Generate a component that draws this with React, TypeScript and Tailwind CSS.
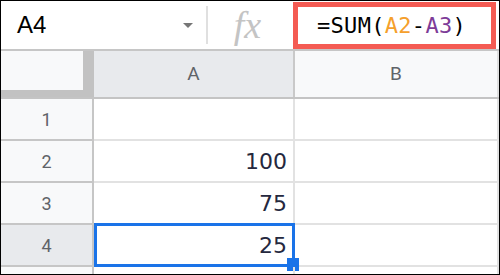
const ROWS = [
  { n: 1, value: '', label: '1' },
  { n: 2, value: '100', label: '2' },
  { n: 3, value: '75', label: '3' },
  { n: 4, value: '25', label: '4' },
  { n: 5, value: '', label: '' },
]

export default function App() {
  return (
    <div className="w-[500px] h-[275px] overflow-hidden bg-white border border-black flex flex-col">
      {/* Formula bar */}
      <div className="h-[50px] shrink-0 flex items-stretch border-b-2 border-[#c6c6c6]">
        <div className="w-[205px] flex items-center justify-between pl-4 pr-[13px]">
          <span className="text-[24px] text-black font-['Liberation_Sans',Arial,sans-serif] leading-none">A4</span>
          <span className="w-0 h-0 border-l-[5px] border-r-[5px] border-t-[5px] border-l-transparent border-r-transparent border-t-[#767676]" />
        </div>
        <div className="w-[2px] my-[5px] bg-[#e0e0e0]" />
        <div className="w-[85px] flex items-center justify-center pr-[6px]">
          <span className="text-[38px] italic text-[#c4c4c4] font-['Liberation_Serif',serif] leading-none">fx</span>
        </div>
        <div className="flex-1 mr-[3px] mt-[1px] border-[5px] border-[#f45b53] flex items-center pl-[19px]">
          <span className="text-[22px] text-black font-['DejaVu_Sans_Mono',monospace] leading-none tracking-[0.3px]">
            =SUM(<span className="text-[#f5a02c]">A2</span>-<span className="text-[#7d3c98]">A3</span>)
          </span>
        </div>
      </div>

      {/* Column headers */}
      <div className="h-[48px] shrink-0 grid grid-cols-[93px_201px_1fr] border-b-2 border-[#c4c4c4]">
        <div className="bg-[#c2c2c2]">
          <div className="w-[82px] h-[39px] bg-[#f8f9fa]" />
        </div>
        <div className="bg-[#e8eaed] border-r-2 border-[#c9c9c9] flex items-center justify-center text-[19px] text-[#5f6368] font-['Roboto',sans-serif]">
          A
        </div>
        <div className="bg-[#f8f9fa] border-r-2 border-[#e0e0e0] flex items-center justify-center text-[19px] text-[#5f6368] font-['Roboto',sans-serif]">
          B
        </div>
      </div>

      {/* Rows */}
      {ROWS.map((row) => {
        const selected = row.n === 4
        return (
          <div key={row.n} className="h-[42px] shrink-0 grid grid-cols-[93px_201px_1fr]">
            <div
              className={`border-r-2 border-b-2 border-[#c6c6c6] flex items-center justify-center text-[18px] text-[#5f6368] font-['Roboto',sans-serif] ${
                selected ? 'bg-[#e8eaed]' : 'bg-[#f8f9fa]'
              }`}
            >
              {row.label}
            </div>
            <div className="relative border-r-2 border-b-2 border-[#e2e2e2] flex items-center justify-end pr-[6px] text-[22px] text-[#25283e] font-['DejaVu_Sans',Verdana,sans-serif]">
              {row.value}
              {selected && (
                <>
                  <div className="absolute -top-[2px] left-0 -right-[2px] -bottom-[2px] border-[3px] border-[#1a73e8]" />
                  <div className="absolute -right-[6px] -bottom-[6px] w-[12px] h-[13px] bg-[#1a73e8]" />
                </>
              )}
            </div>
            <div className="border-r-2 border-b-2 border-[#e2e2e2]" />
          </div>
        )
      })}
    </div>
  )
}
